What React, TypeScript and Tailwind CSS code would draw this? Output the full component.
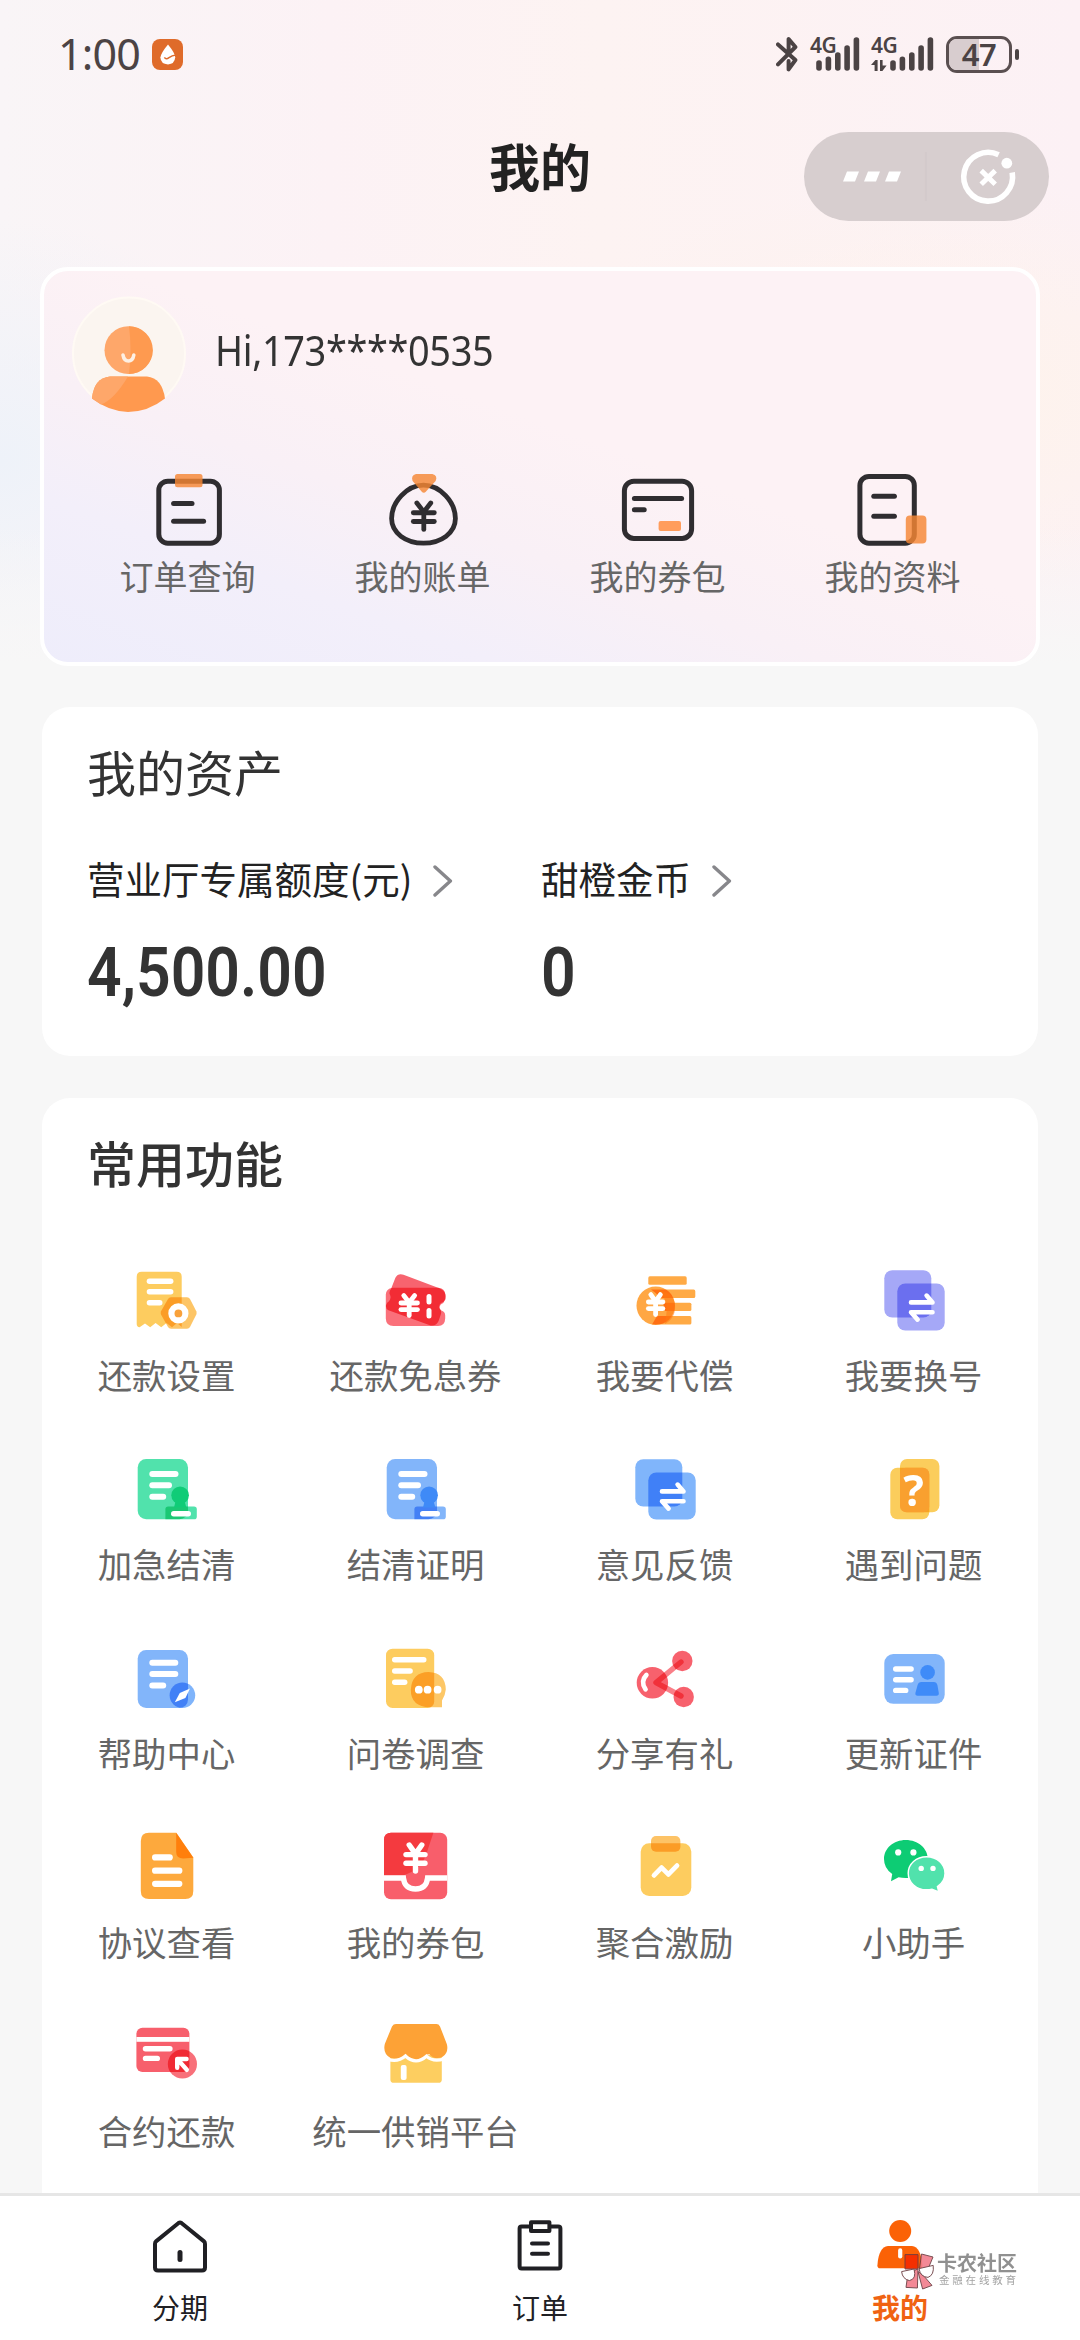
import type { ReactNode } from "react";

const DARK = "#2f2d30";
const ORANGE = "#ff9d5c";

interface YenProps {
  x: number;
  y: number;
  w: number;
  h: number;
  stroke?: number;
  color?: string;
}

// x is the middle of the sign, y its top
const Yen = ({ x, y, w, h, stroke = 4.5, color = "#fff" }: YenProps) => (
  <g stroke={color} strokeWidth={stroke} strokeLinecap="round" strokeLinejoin="round" fill="none">
    <polyline
      points={`${x - w * 0.33},${y} ${x},${y + h * 0.34} ${x + w * 0.33},${y}`}
    />
    <line x1={x} y1={y + h * 0.34} x2={x} y2={y + h} />
    <line x1={x - w / 2} y1={y + h * 0.37} x2={x + w / 2} y2={y + h * 0.37} />
    <line x1={x - w / 2} y1={y + h * 0.7} x2={x + w / 2} y2={y + h * 0.7} />
  </g>
);

// each entry is [x1, x2, y]
const Lines = ({ items, w = 5.4 }: { items: number[][]; w?: number }) => (
  <g stroke="#fff" strokeWidth={w} strokeLinecap="round">
    {items.map(([x1, x2, y]) => (
      <line key={y} x1={x1 + w / 2} y1={y} x2={x2 - w / 2} y2={y} />
    ))}
  </g>
);

const Icon = ({ children }: { children: ReactNode }) => (
  <svg viewBox="0 0 72 72" className="w-[72px] h-[72px] isolate overflow-visible">
    {children}
  </svg>
);

const Swap = ({ color }: { color: string }) => (
  <Icon>
    <g fill={color}>
      <rect className="mix-blend-multiply" x="6.3" y="7.2" width="47" height="47.3" rx="8" />
      <rect className="mix-blend-multiply" x="19.3" y="20.5" width="47.4" height="47" rx="8" />
    </g>
    <g fill="none" stroke="#fff" strokeWidth="4.6" strokeLinecap="round" strokeLinejoin="round">
      <path d="M33 39.4H54.5L48.6 32.6" />
      <path d="M54.5 49.3H33L39.6 56.6" />
    </g>
  </Icon>
);

const Stamp = ({ color, dark }: { color: string; dark: string }) => (
  <Icon>
    <rect x="6.7" y="7" width="50.3" height="60.3" rx="8.5" fill={color} />
    <path
      className="mix-blend-multiply"
      d="M34.4 67.3V57.4Q34.4 54.6 37.2 54.6H63Q65.8 54.6 65.8 57.4V64.4Q65.8 67.3 63 67.3Z"
      fill={color}
    />
    <circle cx="49.1" cy="43.2" r="8.8" fill={dark} />
    <path d="M44.4 50H53.8L55.4 55.4H43Z" fill={dark} />
    <Lines items={[[18.3, 47.5, 22], [18.3, 41, 33.3], [18.3, 35.2, 44.7]]} w={6} />
    <Lines items={[[40, 60, 61.7]]} w={5.4} />
  </Icon>
);

const features: { label: string; icon: ReactNode }[] = [
  {
    label: "还款设置",
    icon: (
      <Icon>
        <path
          d="M10.7 8.7H45.7Q50.7 8.7 50.7 13.7V64L46 60 41 64.3 35.5 60 30.2 64.3 24.6 60 19.2 64.3 14 60.5 8.6 64.3Q5.7 64 5.7 61V13.7Q5.7 8.7 10.7 8.7Z"
          fill="#fdcc5f"
        />
        <path
          className="mix-blend-multiply"
          d="M40 34.3H56Q58 34.3 59 36L65.3 48.2Q66 50 65.3 51.6L59 64Q58 65.7 56 65.7H40Q38 65.7 37 64L30 51.6Q29.3 50 30 48.2L37 36Q38 34.3 40 34.3Z"
          fill="#fdc566"
        />
        <Lines items={[[15.7, 42.4, 18.3], [15.7, 42.4, 28.8], [15.7, 31.5, 39.7]]} />
        <circle cx="47.4" cy="50.4" r="7" fill="#f9a13a" stroke="#fff" strokeWidth="6.2" />
      </Icon>
    ),
  },
  {
    label: "还款免息券",
    icon: (
      <Icon>
        <path
          d="M23.5 11.8 60 25.4Q67 28.4 65.3 36 64.2 39.2 61 40 58.4 42.4 59.6 45.6 62 48 60.8 51.6L58.6 58Q56 63.4 50.6 62.4L8.4 47.2Q5.4 45.6 6 42.2 6.8 39 9 38.2 11.8 35 9.6 31 9 28 11 26L15.4 14.8Q18 10 23.5 11.8Z"
          fill="#f7646f"
        />
        <path
          className="mix-blend-multiply"
          d="M12.6 24.8H58.4Q65.4 25.4 65.4 32.4V36.6Q64 40.2 60.8 41.4 58 44.8 61.4 47.6 65 49 65.2 52.2V55.4Q65 62.8 58 63H13.4Q6 62.8 5.8 55.4V31.4Q6 26 12.6 24.8Z"
          fill="#fa707a"
        />
        <Yen x={29.2} y={32.6} w={16.5} h={20} stroke={4.8} />
        <g stroke="#fff" strokeWidth="5" strokeLinecap="round">
          <line x1="49" y1="33.5" x2="49" y2="39" />
          <line x1="49" y1="47.5" x2="49" y2="53" />
        </g>
      </Icon>
    ),
  },
  {
    label: "我要代偿",
    icon: (
      <Icon>
        <g fill="#ffaa45">
          <rect x="19.3" y="13.3" width="38.4" height="8.5" rx="1.6" />
          <path d="M22 26.6H64.7Q66.3 26.6 66.3 28.2V33.4Q66.3 35 64.7 35H31Q27 29.5 22 26.6Z" />
          <path d="M34 39.7H60.8Q62.4 39.7 62.4 41.3V46.4Q62.4 48 60.8 48H36Z" />
          <path d="M28 53.1H60.8Q62.4 53.1 62.4 54.7V60Q62.4 61.6 60.8 61.6H23Z" />
        </g>
        <circle className="mix-blend-multiply" cx="26.7" cy="42.7" r="19.2" fill="#ffa744" />
        <path d="M25 27Q42 31 36 61 48 54 45.8 40 43 27 25 27Z" fill="#ff7a10" opacity=".55" />
        <Yen x={26.6} y={31.6} w={14.5} h={20} stroke={4.8} />
      </Icon>
    ),
  },
  { label: "我要换号", icon: <Swap color="#a5a8f7" /> },
  { label: "加急结清", icon: <Stamp color="#51e2ac" dark="#10cc77" /> },
  { label: "结清证明", icon: <Stamp color="#82b5fa" dark="#3f8af7" /> },
  { label: "意见反馈", icon: <Swap color="#80b5fb" /> },
  {
    label: "遇到问题",
    icon: (
      <Icon>
        <g fill="#fbcd5c">
          <rect className="mix-blend-multiply" x="22" y="7" width="39.4" height="53.3" rx="7" />
          <rect className="mix-blend-multiply" x="12.3" y="15.7" width="39" height="51.6" rx="7" />
        </g>
        <rect x="22" y="15.7" width="29.3" height="44.6" rx="6" fill="#f99f33" opacity=".8" />
        <text
          x="35.6"
          y="54.4"
          textAnchor="middle"
          className="font-['Noto_Sans',sans-serif] text-[43px] font-bold"
          fill="#fff"
        >
          ?
        </text>
      </Icon>
    ),
  },
  {
    label: "帮助中心",
    icon: (
      <Icon>
        <rect x="6.7" y="9" width="50.3" height="58" rx="8.5" fill="#82b5fa" />
        <circle className="mix-blend-multiply" cx="51.4" cy="54.3" r="12.8" fill="#7fb4fb" />
        <Lines items={[[18.3, 47.3, 21.7], [18.3, 47.3, 33], [18.3, 35.2, 44.4]]} w={6} />
        <path d="M59 47.4 54.4 57 43.8 61.3 48.8 52Z" fill="#fff" />
      </Icon>
    ),
  },
  {
    label: "问卷调查",
    icon: (
      <Icon>
        <rect x="6" y="7.7" width="48.2" height="59.3" rx="6.5" fill="#fdcc5f" />
        <path
          className="mix-blend-multiply"
          d="M62 59.6V66.2H50Q30.6 65.6 30.8 48.4 32 31.2 48.6 31 65.4 31.6 65.8 48.6 65.4 54 62 59.6Z"
          fill="#fdc766"
        />
        <Lines items={[[12, 46.5, 18.8], [12, 32.8, 30], [12, 27.4, 41.2]]} />
        <g fill="#fff">
          <circle cx="38.8" cy="48.7" r="3.9" />
          <circle cx="47.6" cy="48.7" r="3.9" />
          <circle cx="57.6" cy="48.7" r="3.9" />
        </g>
      </Icon>
    ),
  },
  {
    label: "分享有礼",
    icon: (
      <Icon>
        <g fill="#f7616d">
          <circle cx="23.4" cy="41.8" r="15.7" />
          <circle cx="53.3" cy="20" r="10.2" />
          <circle cx="54.7" cy="56" r="10.2" />
        </g>
        <path
          className="mix-blend-multiply"
          d="M52 21 27 41.6 52 55"
          fill="none"
          stroke="#f97f88"
          strokeWidth="5.4"
          strokeLinecap="round"
          strokeLinejoin="round"
        />
        <path
          d="M17.4 34Q11 40.4 16.6 48.4"
          fill="none"
          stroke="#fff"
          strokeWidth="4.6"
          strokeLinecap="round"
        />
      </Icon>
    ),
  },
  {
    label: "更新证件",
    icon: (
      <Icon>
        <rect x="6.3" y="13" width="60.4" height="49.8" rx="9" fill="#82b5fa" />
        <circle cx="49.6" cy="31.4" r="7.3" fill="#3f8bf8" />
        <path
          d="M43.4 41H55.8Q58.6 41 59.4 44L60.8 52Q61 54.8 58.6 54.8H39.6Q37 54.8 37.4 52L39.6 44Q40.4 41 43.4 41Z"
          fill="#3f8bf8"
        />
        <Lines items={[[15, 35.8, 28], [15, 35.8, 38.8], [15, 30.4, 49.4]]} />
      </Icon>
    ),
  },
  {
    label: "协议查看",
    icon: (
      <Icon>
        <path
          d="M18 2.7H45.2L62.3 27.5V61Q62.3 69 54.3 69H18Q9.8 69 9.8 61V11Q9.8 2.7 18 2.7Z"
          fill="#fda93d"
        />
        <path d="M45.2 2.7 62.3 27.7 52 28.6Q45.2 28 45.2 22Z" fill="#ff7f0c" />
        <Lines items={[[21, 41.8, 27.4], [21, 51.4, 40.7], [21, 51.4, 53.8]]} w={6.2} />
      </Icon>
    ),
  },
  {
    label: "我的券包",
    icon: (
      <Icon>
        <rect x="4" y="2.7" width="63.2" height="66.5" rx="7" fill="#f85e6b" />
        <path d="M11 2.7H53.4L47 22Q42 40 23 45.4H4V9.7Q4 2.7 11 2.7Z" fill="#f43a3f" />
        <path
          d="M4 48H23.4Q24.6 59 35.5 59 46.4 59 47.6 48H67.2"
          fill="none"
          stroke="#fff"
          strokeWidth="5.4"
        />
        <Yen x={35.5} y={15} w={19} h={26} stroke={5.4} />
      </Icon>
    ),
  },
  {
    label: "聚合激励",
    icon: (
      <Icon>
        <rect x="11.7" y="13.3" width="50.6" height="52.8" rx="8.5" fill="#fdcc5f" />
        <rect
          className="mix-blend-multiply"
          x="22"
          y="6"
          width="29.4"
          height="15.8"
          rx="5"
          fill="#fdc366"
        />
        <path
          d="M25 45.4 32.6 37.6 39.4 44.4 48 35.6"
          fill="none"
          stroke="#fff"
          strokeWidth="4.8"
          strokeLinecap="round"
          strokeLinejoin="round"
        />
      </Icon>
    ),
  },
  {
    label: "小助手",
    icon: (
      <Icon>
        <path
          d="M27.8 10C40 10 49.8 18.4 49.8 29 49.8 39.6 40 48 27.8 48Q24 48 20.6 47.2L13 51.2 14.2 44Q6 38.4 6 29C6 18.4 15.6 10 27.8 10Z"
          fill="#0dcc74"
        />
        <path
          d="M48.6 26.7C58.8 26.7 67 34 67 43.2 67 49 64 53.6 59.4 56.6L60.8 62 54 59.2Q51.4 59.8 48.6 59.8C38.2 59.8 30.2 52.4 30.2 43.2 30.2 34 38.2 26.7 48.6 26.7Z"
          fill="#51e2ac"
          stroke="#fff"
          strokeWidth="1.4"
        />
        <g fill="#fff">
          <circle cx="20.2" cy="22.4" r="3.1" />
          <circle cx="35.4" cy="22.4" r="3.1" />
          <circle cx="43.2" cy="38.4" r="2.7" />
          <circle cx="55" cy="38.4" r="2.7" />
        </g>
      </Icon>
    ),
  },
  {
    label: "合约还款",
    icon: (
      <Icon>
        <rect x="5.4" y="8.7" width="53" height="44.4" rx="6" fill="#f75f6c" />
        <circle className="mix-blend-multiply" cx="51.4" cy="45" r="14.6" fill="#f8707a" />
        <rect x="5.4" y="18" width="53" height="4.8" fill="#fff" />
        <Lines items={[[11.8, 41.6, 29.8], [11.8, 29, 39.4]]} />
        <path
          d="M55.8 50.8 46.6 40.4M46.2 48.8V40H55.6"
          fill="none"
          stroke="#fff"
          strokeWidth="4.4"
          strokeLinecap="round"
          strokeLinejoin="round"
        />
      </Icon>
    ),
  },
  {
    label: "统一供销平台",
    icon: (
      <Icon>
        <path d="M10.4 36H61.8V60.4Q61.8 63.8 58.4 63.8H13.8Q10.4 63.8 10.4 60.4Z" fill="#fdce60" />
        <path
          d="M16 5H56.4Q58.8 5 60 7.4L66.8 25Q69 33 62.6 37.8 55 41.4 49.4 35.2 45 35.4 42 39.4 36 43 30.4 39.4L25.8 35.2Q20 41.4 10.6 39 2.6 34.6 4.8 25L12 7.4Q13.4 5 16 5Z"
          fill="#fda236"
        />
        <path
          d="M8 40.4Q18 43.4 25.4 37 36 46.6 46.4 37.2 53 43.4 64 40"
          fill="none"
          stroke="#fff"
          strokeWidth="3.2"
        />
        <rect x="20.8" y="46" width="5.8" height="15" rx="2" fill="#fff" />
      </Icon>
    ),
  },
];

const shortcuts: { label: string; icon: ReactNode }[] = [
  {
    label: "订单查询",
    icon: (
      <Icon>
        <rect x="6.8" y="7.2" width="60.6" height="62" rx="9" fill="none" stroke={DARK} strokeWidth="5" />
        <rect x="23" y="0" width="27.5" height="13.2" rx="2.5" fill="#f58634" opacity=".82" />
        <g stroke={DARK} strokeWidth="5" strokeLinecap="round">
          <line x1="21.6" y1="29.5" x2="40" y2="29.5" />
          <line x1="21.6" y1="47.2" x2="51.6" y2="47.2" />
        </g>
      </Icon>
    ),
  },
  {
    label: "我的账单",
    icon: (
      <Icon>
        <path
          d="M36.5 11.2C53 11.2 68.4 28 68.4 44.6 68.4 59 54 69.2 36.5 69.2 19 69.2 4.6 59 4.6 44.6 4.6 28 20 11.2 36.5 11.2Z"
          fill="none"
          stroke={DARK}
          strokeWidth="4.8"
        />
        <path
          d="M29 0H45.4Q51 1.6 48.6 7L39 17.6Q36.8 20 34.6 17.6L25.6 7Q23.6 1.6 29 0Z"
          fill="#f58634"
          opacity=".82"
        />
        <Yen x={36.8} y={29} w={21} h={26.4} stroke={4.8} color={DARK} />
      </Icon>
    ),
  },
  {
    label: "我的券包",
    icon: (
      <Icon>
        <rect x="2.4" y="7.2" width="67.2" height="57.2" rx="9.5" fill="none" stroke={DARK} strokeWidth="5" />
        <g stroke={DARK} strokeWidth="5" strokeLinecap="round">
          <line x1="12.4" y1="24.4" x2="59.6" y2="24.4" />
          <line x1="12.4" y1="35.7" x2="22.2" y2="35.7" />
        </g>
        <rect x="36.6" y="47" width="22.4" height="10" rx="2" fill={ORANGE} />
      </Icon>
    ),
  },
  {
    label: "我的资料",
    icon: (
      <Icon>
        <rect x="2.9" y="2.4" width="54.4" height="66.8" rx="9" fill="none" stroke={DARK} strokeWidth="5" />
        <g stroke={DARK} strokeWidth="5" strokeLinecap="round">
          <line x1="16.8" y1="22.3" x2="37.4" y2="22.3" />
          <line x1="16.8" y1="42.3" x2="37.4" y2="42.3" />
        </g>
        <rect x="48.8" y="41.4" width="20.6" height="28" rx="4" fill="#f58634" opacity=".82" />
      </Icon>
    ),
  },
];

const Signal = () => (
  <svg viewBox="0 0 45 34" className="w-[45px] h-[34px]" stroke="#4b4344" strokeWidth="5.6" strokeLinecap="round">
    <line x1="3" y1="26" x2="3" y2="31" />
    <line x1="12.4" y1="22.4" x2="12.4" y2="31" />
    <line x1="21.8" y1="18" x2="21.8" y2="31" />
    <line x1="31.1" y1="11" x2="31.1" y2="31" />
    <line x1="40.4" y1="3" x2="40.4" y2="31" />
  </svg>
);

const StatusBar = () => (
  <div className="flex h-[108px] items-center pl-[58px] pr-[61px] text-[#4b4344] font-['Noto_Sans',sans-serif]">
    <span className="w-[94px] text-[43px] leading-[60px] tracking-[-0.8px]">1:00</span>
    <svg viewBox="0 0 31 31" className="w-[31px] h-[31px]">
      <rect width="31" height="31" rx="8" fill="#df6b2a" />
      <path d="M16 5.6Q23.4 14.6 23.2 18.6 22.6 25.2 16 25.4 8.8 25.2 8.4 18.6 8.6 14.6 16 5.6Z" fill="#fff" />
      <path d="M12.4 18.4Q14 20.8 17 18.6T24 16" fill="none" stroke="#df6b2a" strokeWidth="1.5" />
    </svg>
    <div className="ml-auto flex items-center">
      <svg
        viewBox="0 0 22 36"
        className="w-[22px] h-[36px]"
        fill="none"
        stroke="#4b4344"
        strokeWidth="4"
        strokeLinecap="round"
        strokeLinejoin="round"
      >
        <path d="M2 8.4 19.4 24 12.6 33.4V25M2 28.4 19.4 11 12.6 3V18" />
      </svg>
      <div className="relative ml-[18px] flex">
        <span className="absolute -left-[6px] -top-[4px] text-[21px] leading-[24px] font-semibold tracking-[-0.5px]">
          4G
        </span>
        <Signal />
      </div>
      <div className="relative ml-[29px] flex">
        <span className="absolute -left-[19px] -top-[4px] text-[21px] leading-[24px] font-semibold tracking-[-0.5px]">
          4G
        </span>
        <svg viewBox="0 0 16 11" className="absolute -left-[19px] top-[23px] w-[16px] h-[11px]" fill="#4b4344">
          <path d="M0 5 4.4 0H6.6V11H3.6V5Z" />
          <path d="M9 0H11.6V5.4H15.6L11.4 11H9Z" />
        </svg>
        <Signal />
      </div>
      <div className="relative ml-[11px] flex h-[37px] w-[66px] items-center justify-center rounded-[11px] border-[3px] border-[#5a4f50]">
        <div className="absolute inset-y-0 left-0 w-[30px] rounded-l-[8px] bg-[#d8cdcf]" />
        <span className="relative text-[31px] leading-[31px] font-semibold tracking-[-0.5px]">47</span>
      </div>
      <div className="ml-[3px] h-[11px] w-[4px] rounded-full bg-[#4b4344]" />
    </div>
  </div>
);

const TitleBar = () => (
  <div className="relative flex h-[138px] items-center justify-center">
    <h1 className="mb-[25px] text-[51px] leading-[60px] font-bold text-[#222]">我的</h1>
    <div className="absolute right-[31px] top-[24px] flex h-[89px] w-[245px] items-center rounded-full bg-[#d7cecf]">
      <svg viewBox="0 0 245 89" className="w-full h-full">
        <g fill="#fff">
          <path d="M43 39.6H55L51 49.6H39Z" />
          <path d="M64 39.6H76L72 49.6H60Z" />
          <path d="M85 39.6H97L93 49.6H81Z" />
          <circle cx="202.8" cy="31.2" r="5.4" />
        </g>
        <line x1="121.8" y1="20" x2="121.8" y2="69" stroke="#d3cacb" strokeWidth="2" />
        <g fill="none" stroke="#fff" strokeWidth="5.6" strokeLinecap="butt">
          <path d="M194.6 22.7A24.4 24.4 0 1 0 208.2 40.6" />
          <path d="M177.2 38.6 191.2 52.2M191.2 38.6 177.2 52.2" strokeWidth="5" />
        </g>
      </svg>
    </div>
  </div>
);

const Avatar = () => (
  <svg viewBox="0 0 114 118" className="w-[114px] h-[118px]">
    <circle cx="57" cy="57.6" r="56" fill="#fbf5f0" stroke="#fffaf4" strokeWidth="2" />
    <circle cx="56.4" cy="54.2" r="23.9" fill="#fea76a" />
    <path d="M57 30.3A23.9 23.9 0 0 1 57 78.1Q60 54 57 30.3Z" fill="#fe9a50" />
    <path
      d="M20 102.6Q22 82 38 80.6H75Q90 82 93 102.6 76 116 56 116 37 115.6 20 102.6Z"
      fill="#ff994f"
    />
    <path d="M20 102.6Q22 82 38 80.6H56Q42 104 29 108.6Z" fill="#fea76a" />
    <path
      d="M51 59Q52 65 56.4 65T61.8 59"
      fill="none"
      stroke="#fdf0e4"
      strokeWidth="3.6"
      strokeLinecap="round"
    />
  </svg>
);

const Chevron = () => (
  <svg
    viewBox="0 0 20 32"
    className="mt-[5px] w-[20px] h-[32px]"
    fill="none"
    stroke="#87878b"
    strokeWidth="3.4"
    strokeLinecap="round"
    strokeLinejoin="round"
  >
    <path d="M2 2 17.4 16 2 30" />
  </svg>
);

const Asset = ({ label, value, className }: { label: string; value: string; className: string }) => (
  <div className={className}>
    <div className="flex items-center text-[37.5px] leading-[52px] text-[#222]">
      <span className="mr-[21px] whitespace-nowrap">{label}</span>
      <Chevron />
    </div>
    <div className="mt-[29px] origin-left scale-x-[0.88] font-['Roboto',sans-serif] text-[69px] leading-[80px] font-semibold text-[#333]">
      {value}
    </div>
  </div>
);

const Watermark = () => (
  <div className="absolute left-[901px] top-[57px] flex items-start opacity-90">
    <svg viewBox="0 0 33 37" className="w-[33px] h-[37px]">
      <g stroke="#6b3b40" strokeWidth="1" strokeLinejoin="round">
        <path d="M4 1.6H17V16H4Z" fill="#f52a00" />
        <path d="M20.5 1 32 4 27.6 14.6 18.4 16.6Z" fill="#f27d8b" />
        <path d="M7 20 17 16 16.4 35 5 34.4Z" fill="#f27d8b" />
        <path d="M17 18.6 22 22 31 32.4 21.6 36Z" fill="#f27d8b" />
        <path d="M.6 18.6 13 16Q15.8 26 8.4 27.6 1.4 26 .6 18.6Z" fill="#fff" />
        <path d="M18 15.6 32.2 12.4Q33.4 22 27 24.4 19.4 24 18 15.6Z" fill="#fff" />
      </g>
    </svg>
    <div className="-mt-[2px] ml-[3px] whitespace-nowrap">
      <div className="text-[20px] leading-[23px] font-bold text-[#858585]">卡农社区</div>
      <div className="ml-[2px] text-[10.5px] leading-[12px] tracking-[2.8px] text-[#999]">
        金融在线教育
      </div>
    </div>
  </div>
);

const tabs = [
  {
    label: "分期",
    active: false,
    icon: (
      <svg
        viewBox="0 0 60 60"
        className="w-[60px] h-[60px]"
        fill="none"
        stroke="#202024"
        strokeWidth="4"
        strokeLinecap="round"
        strokeLinejoin="round"
      >
        <path d="M28.6 7Q30 6 31.4 7L54 25.4Q55 26.2 55 28V51.4Q55 54.4 52 54.4H8Q5 54.4 5 51.4V28Q5 26.2 6 25.4Z" />
        <line x1="30" y1="36.4" x2="30" y2="43.6" strokeWidth="5" />
      </svg>
    ),
  },
  {
    label: "订单",
    active: false,
    icon: (
      <svg
        viewBox="0 0 60 60"
        className="w-[60px] h-[60px]"
        fill="none"
        stroke="#202024"
        strokeWidth="4"
        strokeLinecap="round"
        strokeLinejoin="round"
      >
        <path d="M20 10.6H11.6Q9.6 10.6 9.6 12.6V50.2Q9.6 52.4 11.6 52.4H48.2Q50.4 52.4 50.4 50.2V12.6Q50.4 10.6 48.2 10.6H40" />
        <rect x="21" y="6.2" width="18.4" height="8.8" />
        <path d="M22 27.6H38M22 37.8H38" />
      </svg>
    ),
  },
  {
    label: "我的",
    active: true,
    icon: (
      <svg viewBox="0 0 60 60" className="w-[60px] h-[60px]" fill="#fb6206">
        <circle cx="30.2" cy="15" r="11" />
        <path d="M18 30H42Q51 31 52.4 49.4Q52.4 52.2 50 52.2H10Q7.4 52.2 7.4 49.4 8.6 31 18 30Z" />
        <line x1="30.2" y1="34.4" x2="30.2" y2="40.4" stroke="#fff" strokeWidth="4.2" strokeLinecap="round" />
      </svg>
    ),
  },
];

const TabBar = () => (
  <div className="relative grid h-[147px] shrink-0 grid-cols-3 border-t-[3px] border-[#e6e6e6] bg-white">
    {tabs.map((tab) => (
      <div key={tab.label} className="flex flex-col items-center pt-[20px]">
        {tab.icon}
        <span
          className={
            tab.active
              ? "mt-[11px] text-[28px] leading-[40px] font-bold text-[#f06312]"
              : "mt-[11px] text-[28px] leading-[40px] text-[#202024]"
          }
        >
          {tab.label}
        </span>
      </div>
    ))}
    <Watermark />
  </div>
);

const App = () => {
  return (
    <div className="flex h-[2340px] w-[1080px] flex-col overflow-hidden bg-[#f7f7f7] font-['Noto_Sans_CJK_SC',sans-serif]">
      <div className="min-h-0 flex-1 overflow-hidden">
        <div className="h-[707px] bg-[linear-gradient(180deg,rgba(247,247,247,0)_74%,#f7f7f7_94%),radial-gradient(280px_240px_at_0px_460px,#eef2f9_0%,rgba(238,242,249,0)_100%),radial-gradient(400px_220px_at_940px_400px,#fef3eb_0%,rgba(254,243,235,0)_100%),linear-gradient(90deg,#f9f5f7_0px,#fcf2f5_330px,#fdf3f2_600px,#fcf1f5_1080px)]">
          <StatusBar />
          <TitleBar />
          <div className="mx-[40px] mt-[21px] h-[399px] rounded-[28px] border-4 border-white bg-[linear-gradient(20deg,#eeedfb_0%,#f3effa_22%,#f9f0f6_38%,#fdf2f5_56%)]">
            <div className="flex items-start pl-[28px] pt-[25px]">
              <Avatar />
              <span className="ml-[29px] mt-[26px] origin-left scale-x-[0.925] font-['Noto_Sans',sans-serif] text-[41px] leading-[56px] tracking-[-0.4px] text-[#333]">
                Hi,173****0535
              </span>
            </div>
            <div className="mx-[26px] mt-[60px] grid grid-cols-4">
              {shortcuts.map((item) => (
                <div key={item.label} className="flex flex-col items-center">
                  {item.icon}
                  <span className="mt-[6px] text-[34px] leading-[48px] text-[#666]">{item.label}</span>
                </div>
              ))}
            </div>
          </div>
        </div>

        <section className="mx-[42px] h-[349px] rounded-[28px] bg-white px-[45px] pt-[32px]">
          <h2 className="text-[49px] leading-[64px] text-[#333]">我的资产</h2>
          <div className="mt-[49px] flex">
            <Asset className="w-[454px]" label="营业厅专属额度(元)" value="4,500.00" />
            <Asset className="flex-1" label="甜橙金币" value="0" />
          </div>
        </section>

        <section className="mx-[42px] mt-[42px] h-[1200px] rounded-[28px] bg-white pt-[32px]">
          <h2 className="ml-[45px] text-[49px] leading-[64px] font-medium text-[#333]">常用功能</h2>
          <div className="mt-[69px] grid grid-cols-4 gap-y-[52px]">
            {features.map((item) => (
              <div key={item.label} className="flex flex-col items-center">
                {item.icon}
                <span className="mt-[15px] mb-[2px] whitespace-nowrap text-[34.4px] leading-[48px] text-[#666]">
                  {item.label}
                </span>
              </div>
            ))}
          </div>
        </section>
      </div>
      <TabBar />
    </div>
  );
};

export default App;
